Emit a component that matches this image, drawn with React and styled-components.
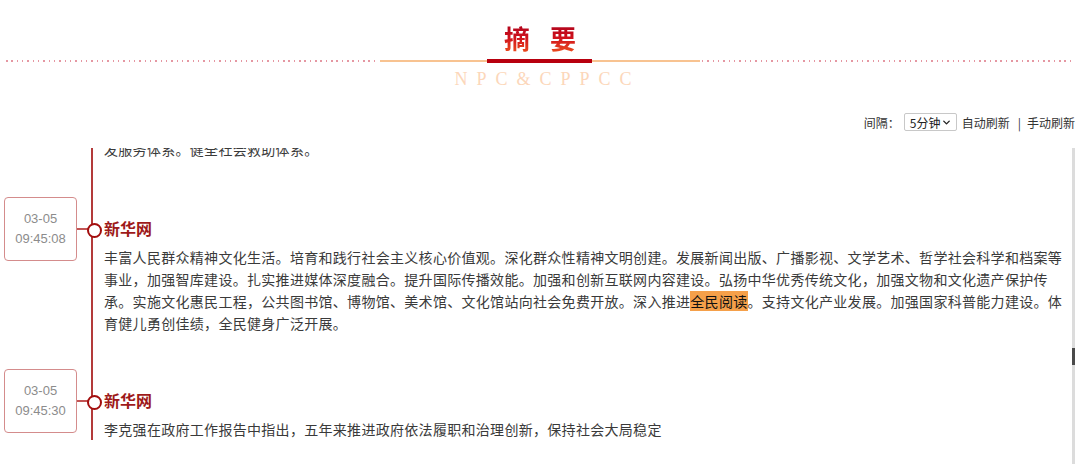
import React from "react";
import styled, { createGlobalStyle } from "styled-components";
import { ChevronDown } from "lucide-react";

const GlobalStyle = createGlobalStyle`
  html, body { margin: 0; padding: 0; background: #fff; }
  body {
    font-family: "Noto Sans CJK SC", "Noto Sans", sans-serif;
    width: 1080px;
    height: 464px;
    overflow: hidden;
  }
  * { box-sizing: border-box; }
`;

const Page = styled.div`
  width: 1080px;
  height: 464px;
  display: flex;
  flex-direction: column;
  overflow: hidden;
`;

const Header = styled.header`
  padding-top: 22px;
  display: flex;
  flex-direction: column;
  align-items: center;
`;

const Title = styled.h1`
  margin: 0;
  font-size: 26px;
  line-height: 32px;
  font-weight: 700;
  letter-spacing: 20px;
  padding-left: 20px;
  background: linear-gradient(180deg, #a8001c 0%, #d0121c 50%, #ee521e 100%);
  -webkit-background-clip: text;
  background-clip: text;
  color: transparent;
`;

const RuleRow = styled.div`
  width: 100%;
  height: 4px;
  margin-top: 5px;
  padding: 0 5px 0 6px;
  display: flex;
  align-items: center;
`;

const Dots = styled.div`
  flex: 1;
  height: 2px;
  margin: ${(p) => (p.$side === "left" ? "0 1px 0 0" : "0 0 0 2px")};
  background: repeating-linear-gradient(
    90deg,
    #e597a2 0 1.5px,
    transparent 1.5px 5.33px
  );
`;

const AccentLine = styled.div`
  width: ${(p) => p.$w}px;
  height: 2px;
  background: #f8c391;
`;

const RedBar = styled.div`
  width: 105px;
  height: 4px;
  background: #b8000e;
`;

const Subtitle = styled.div`
  margin-top: 6px;
  font-family: "Liberation Serif", "Times New Roman", serif;
  font-size: 18px;
  line-height: 20px;
  letter-spacing: 9px;
  padding-left: 15px;
  color: #fcd7ba;
`;

const Toolbar = styled.div`
  margin-top: 23px;
  height: 20px;
  padding-right: 5px;
  display: flex;
  justify-content: flex-end;
  align-items: center;
  font-size: 12px;
  color: #333;
`;

const Label = styled.span`
  margin-right: 4px;
`;

const SelectBox = styled.div`
  width: 53px;
  height: 18px;
  margin-right: 5px;
  padding: 0 4px 0 5px;
  display: inline-flex;
  align-items: center;
  justify-content: space-between;
  border: 1px solid #c8c8c8;
  border-radius: 2px;
  font-size: 12px;
  color: #222;
  background: #fff;
`;

const ToolLink = styled.span`
  color: #333;
  cursor: pointer;
`;

const Sep = styled.span`
  margin: 0 6px 0 8px;
  color: #333;
`;

const Viewport = styled.div`
  margin-top: 16px;
  flex: 1;
  min-height: 0;
  display: flex;
  overflow: hidden;
`;

const List = styled.div`
  flex: 1;
  min-width: 0;
`;

const Track = styled.div`
  width: 3px;
  margin-right: 5px;
  flex-shrink: 0;
  background: #dcdcdc;
`;

const Thumb = styled.div`
  margin-top: ${(p) => p.$offset}px;
  height: 17px;
  background: #4a4a4a;
`;

const Entry = styled.div`
  display: grid;
  grid-template-columns: 91px 1fr;
`;

const DateCol = styled.div`
  padding-top: ${(p) => (p.$tail ? 0 : 35)}px;
`;

const DateRow = styled.div`
  display: flex;
  align-items: center;
`;

const DateBox = styled.div`
  margin-left: 4px;
  width: 73px;
  height: 64px;
  flex-shrink: 0;
  border: 1px solid #d48c8c;
  border-radius: 4px;
  display: flex;
  flex-direction: column;
  align-items: center;
  justify-content: center;
  font-family: "Liberation Sans", Arial, sans-serif;
  font-size: 13px;
  line-height: 20px;
  color: #8c8c8c;
`;

const Connector = styled.div`
  flex: 1;
  height: 2px;
  background: #c25454;
`;

const ContentCol = styled.div`
  border-left: 2px solid #b33a3a;
  padding: ${(p) => (p.$tail ? "0 4px 2px 11px" : "54px 4px 0 11px")};
`;

const Source = styled.div`
  position: relative;
  font-size: 16px;
  line-height: 24px;
  font-weight: 700;
  color: #9e1a1a;

  &::before {
    content: "";
    position: absolute;
    left: -17px;
    top: 6.5px;
    width: 11px;
    height: 11px;
    border: 2.5px solid #a30e0e;
    border-radius: 50%;
    background: #fff;
  }
`;

const Body = styled.p`
  margin: ${(p) => (p.$tail ? -10 : 6)}px 0 0;
  font-size: 14px;
  line-height: 22px;
  letter-spacing: 0.3px;
  color: #3a3a3a;
`;

const Mark = styled.span`
  background: #f5a04a;
  color: #111;
`;

const entries = [
  {
    date: "03-05",
    time: "09:45:08",
    source: "新华网",
    body: (
      <>
        丰富人民群众精神文化生活。培育和践行社会主义核心价值观。深化群众性精神文明创建。发展新闻出版、广播影视、文学艺术、哲学社会科学和档案等事业，加强智库建设。扎实推进媒体深度融合。提升国际传播效能。加强和创新互联网内容建设。弘扬中华优秀传统文化，加强文物和文化遗产保护传承。实施文化惠民工程，公共图书馆、博物馆、美术馆、文化馆站向社会免费开放。深入推进
        <Mark>全民阅读</Mark>
        。支持文化产业发展。加强国家科普能力建设。体育健儿勇创佳绩，全民健身广泛开展。
      </>
    ),
  },
  {
    date: "03-05",
    time: "09:45:30",
    source: "新华网",
    body: "李克强在政府工作报告中指出，五年来推进政府依法履职和治理创新，保持社会大局稳定",
  },
];

export default function App() {
  return (
    <Page>
      <GlobalStyle />
      <Header>
        <Title>摘要</Title>
        <RuleRow>
          <Dots $side="left" />
          <AccentLine $w={107} />
          <RedBar />
          <AccentLine $w={108} />
          <Dots $side="right" />
        </RuleRow>
        <Subtitle>NPC&amp;CPPCC</Subtitle>
      </Header>

      <Toolbar>
        <Label>间隔：</Label>
        <SelectBox>
          <span>5分钟</span>
          <ChevronDown size={11} strokeWidth={3} color="#222" />
        </SelectBox>
        <ToolLink>自动刷新</ToolLink>
        <Sep>|</Sep>
        <ToolLink>手动刷新</ToolLink>
      </Toolbar>

      <Viewport>
        <List>
          <Entry>
            <DateCol $tail />
            <ContentCol $tail>
              <Body $tail>发服务体系。健全社会救助体系。</Body>
            </ContentCol>
          </Entry>
          {entries.map((e, i) => (
            <Entry key={i}>
              <DateCol>
                <DateRow>
                  <DateBox>
                    <span>{e.date}</span>
                    <span>{e.time}</span>
                  </DateBox>
                  <Connector />
                </DateRow>
              </DateCol>
              <ContentCol>
                <Source>{e.source}</Source>
                <Body>{e.body}</Body>
              </ContentCol>
            </Entry>
          ))}
        </List>
        <Track>
          <Thumb $offset={200} />
        </Track>
      </Viewport>
    </Page>
  );
}
